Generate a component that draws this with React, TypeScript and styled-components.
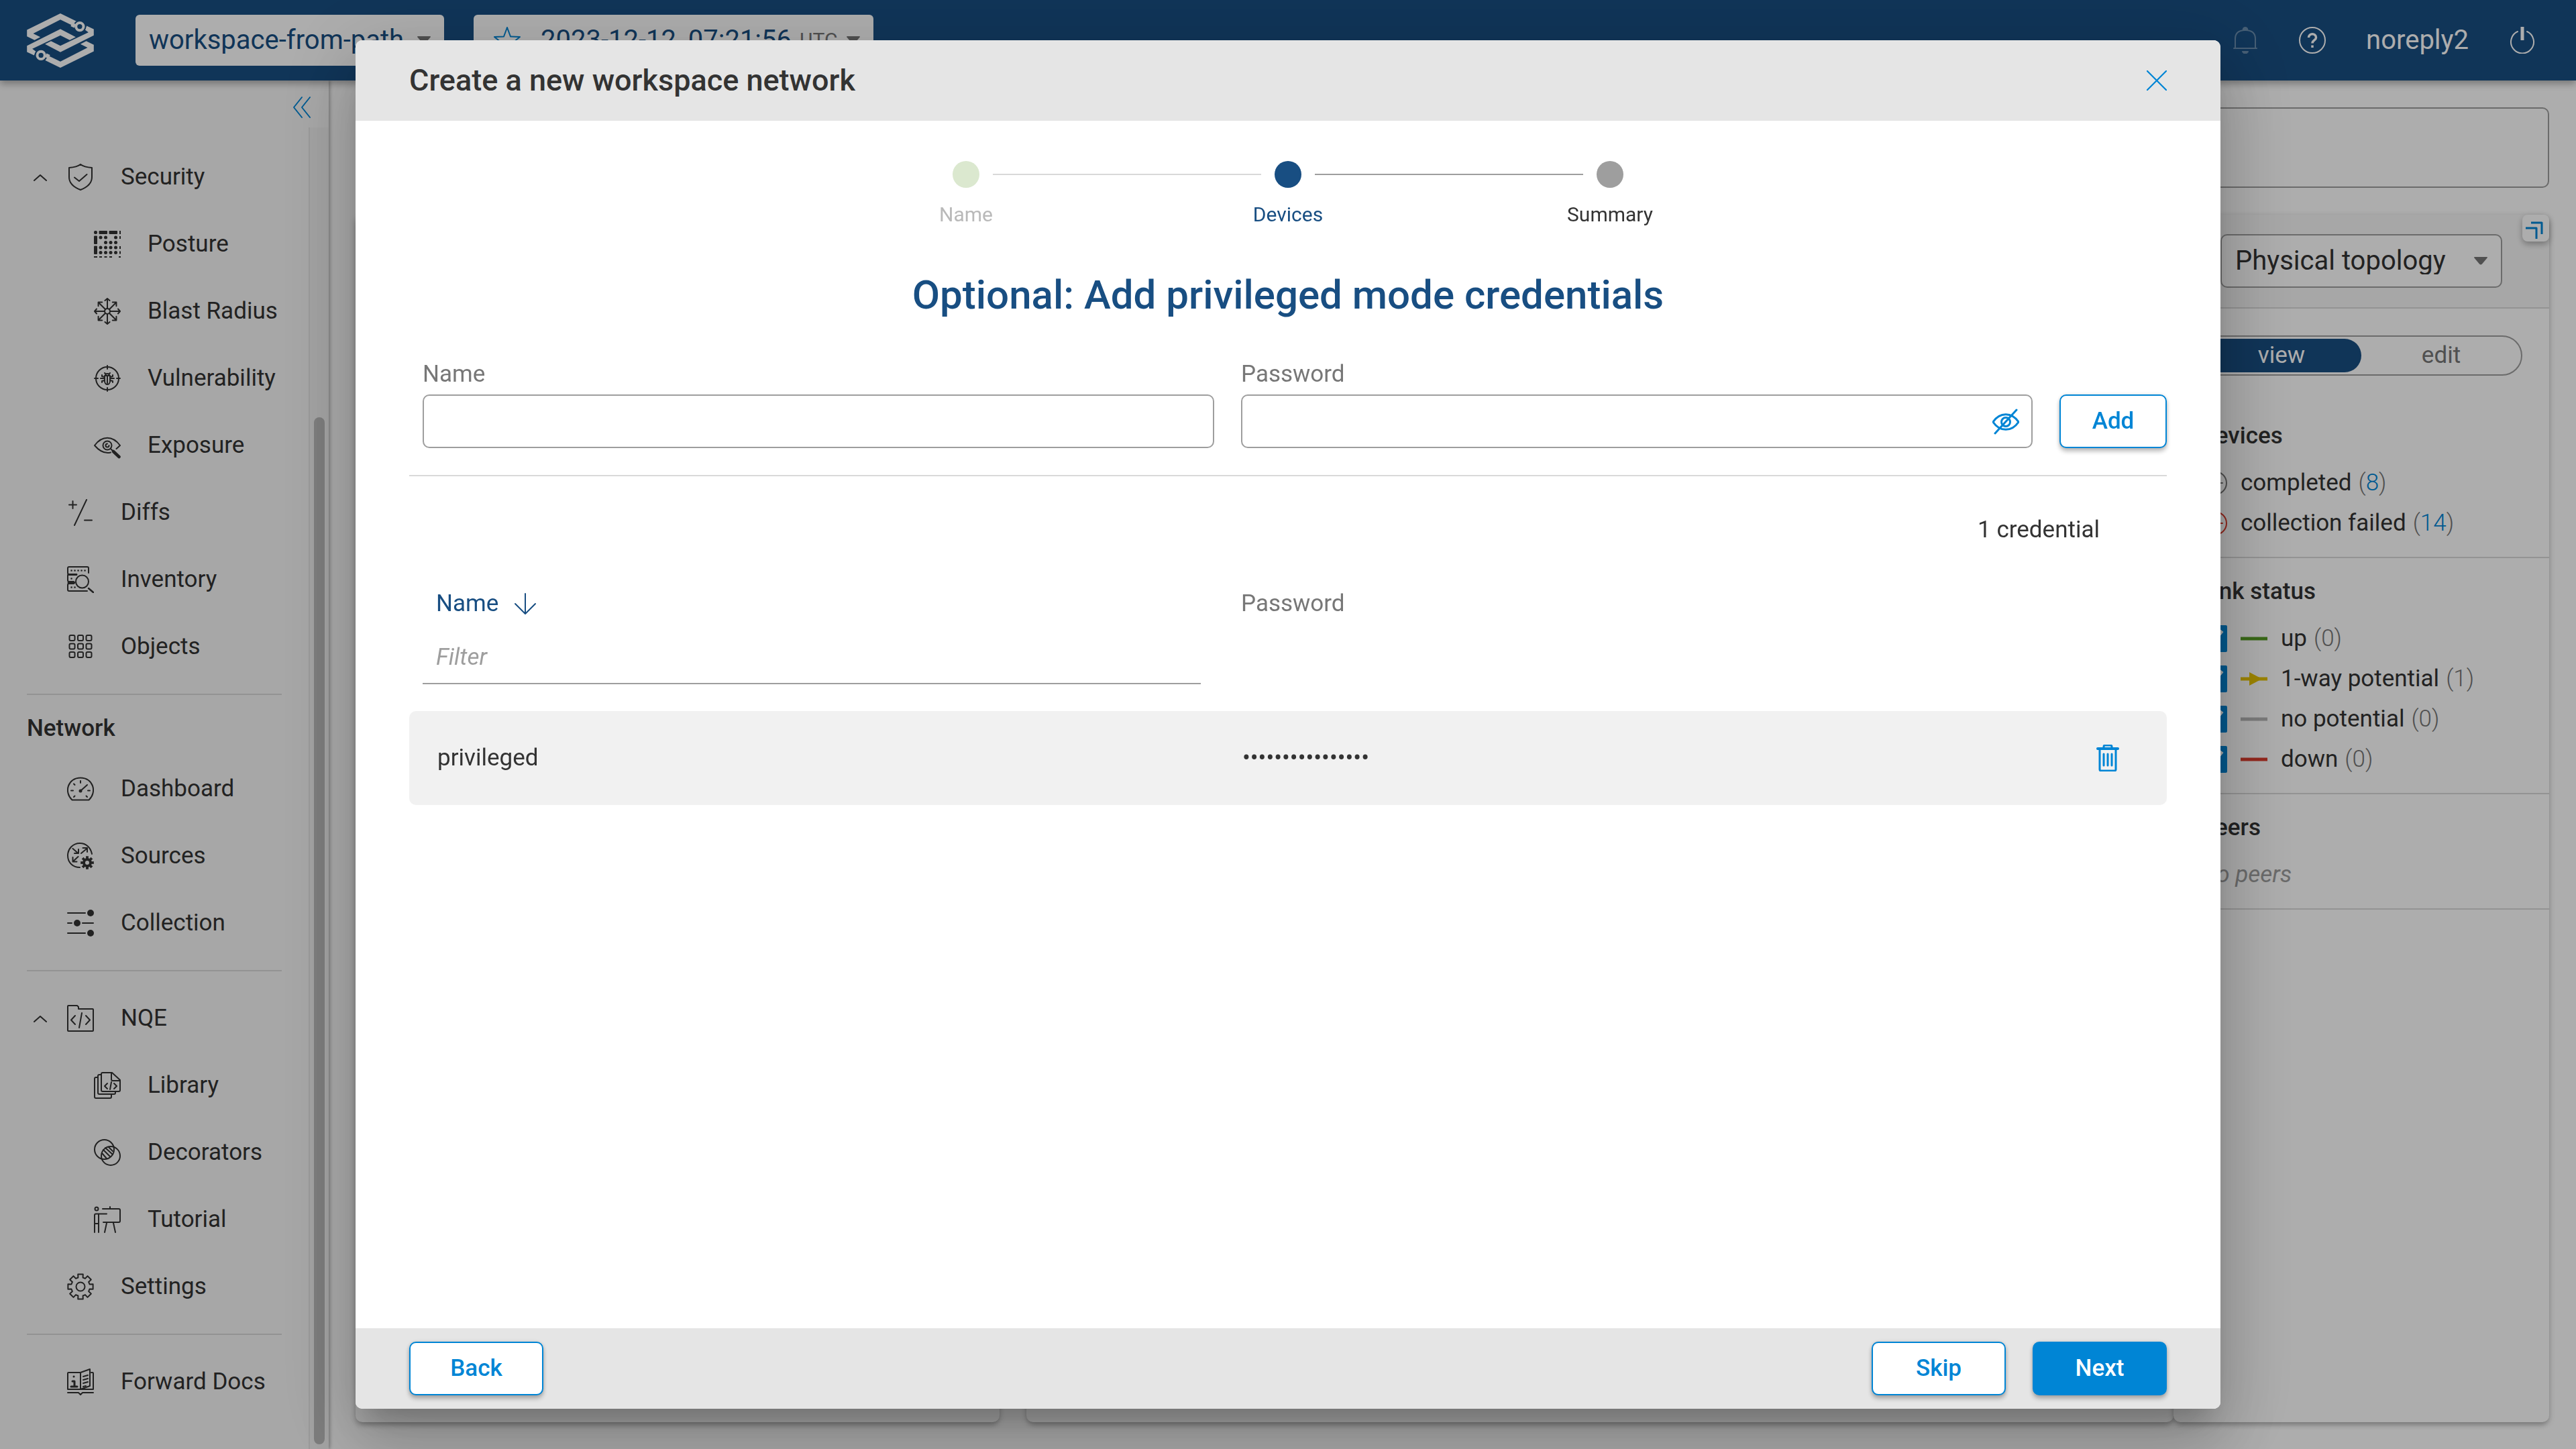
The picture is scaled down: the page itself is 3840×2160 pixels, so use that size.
import React, { ReactNode } from "react";
import styled, { createGlobalStyle, css } from "styled-components";

const color = {
  navy: "#184e82",
  blue: "#0085d5",
  text: "#333",
  muted: "#777",
  line: "#d9d9d9",
  border: "#9e9e9e",
  panel: "#f7f7f7",
  bar: "#e5e5e5",
  row: "#f1f1f1",
};

const GlobalStyle = createGlobalStyle`
  *, *::before, *::after { box-sizing: border-box; }
  body { margin: 0; background: #fff; }
  body, button, input, select {
    font-family: Roboto, sans-serif;
    font-size: 35px;
    line-height: 40px;
    color: ${color.text};
  }
  button { padding: 0; border: 0; background: none; cursor: pointer; }
  a { color: inherit; text-decoration: none; }
  h1, h2, h3, p, ul, ol { margin: 0; padding: 0; font-weight: 400; }
  ul, ol { list-style: none; }
  svg { display: block; flex: none; }
`;

/* ---------- icons ---------- */

const Icon = styled.svg.attrs({ viewBox: "0 0 40 40", fill: "none", stroke: "currentColor", "aria-hidden": true })<{ $size?: number }>`
  width: ${(p) => p.$size ?? 40}px;
  height: ${(p) => p.$size ?? 40}px;
  stroke-width: 2;
  stroke-linecap: round;
  stroke-linejoin: round;
`;

function gearPath(cx: number, cy: number, outer: number, inner: number) {
  const points: string[] = [];
  for (let i = 0; i < 8; i++) {
    const mid = (i * Math.PI) / 4 - Math.PI / 2;
    [
      [inner, -0.26],
      [outer, -0.2],
      [outer, 0.2],
      [inner, 0.26],
    ].forEach(([r, offset]) => {
      points.push(`${(cx + r * Math.cos(mid + offset)).toFixed(2)} ${(cy + r * Math.sin(mid + offset)).toFixed(2)}`);
    });
  }
  return `M${points.join("L")}Z`;
}

const ShieldIcon = () => (
  <Icon>
    <path d="M20 1c4.500 3.500 9.500 4.500 17 5v14c0 9.500-8 15.500-17 19C11 35.500 3 29.500 3 20V6C10.500 5.500 15.500 4.500 20 1Z" />
    <path d="M11 20.500 18 26 29.500 16" />
  </Icon>
);

const postureDots = [
  [10, 10], [17.5, 10], [32.5, 10],
  [17.5, 17.5], [25, 17.5], [32.5, 17.5],
  [10, 25], [17.5, 25], [25, 25], [32.5, 25],
  [10, 32.5], [17.5, 32.5], [25, 32.5], [32.5, 32.5],
];

const PostureIcon = () => (
  <Icon>
    <g fill="currentColor" stroke="none">
      <rect x="0" y="0" width="5" height="5" rx="2" />
      <rect x="7.500" y="0" width="12.500" height="5" rx="1" />
      <rect x="22.500" y="0" width="12.500" height="5" rx="1" />
      <rect x="38" y="0" width="2" height="5" />
      <rect x="0" y="7.500" width="5" height="12.500" rx="1" />
      <rect x="0" y="22.500" width="5" height="12.500" rx="1" />
      <rect x="0" y="38" width="5" height="2" />
      {postureDots.map(([x, y]) => (
        <circle key={`${x}-${y}`} cx={x} cy={y} r="2.500" />
      ))}
      {[10, 25, 32.5].map((y) => (
        <rect key={y} x="38" y={y - 2} width="2" height="4" />
      ))}
      {[10, 17.5, 25, 39].map((x) => (
        <rect key={x} x={x - 2} y="38" width="4" height="2" />
      ))}
    </g>
  </Icon>
);

const BlastIcon = () => (
  <Icon>
    <circle cx="20" cy="20" r="4" />
    {[0, 90, 180, 270].map((a) => (
      <path key={a} transform={`rotate(${a} 20 20)`} d="M20 16V1.500M16.500 4 20 1l3.500 3" />
    ))}
    {[45, 135, 225, 315].map((a) => (
      <path key={a} transform={`rotate(${a} 20 20)`} d="M20 16V1.500M16 5l4-4 4 4" />
    ))}
  </Icon>
);

const BugTargetIcon = () => (
  <Icon>
    <circle cx="20" cy="20" r="17" />
    <path d="M20 1v5M20 34v5M1 20h5M34 20h5" />
    <path d="M16 16h8v8a4 5 0 0 1-8 0ZM17 16c0-4 6-4 6 0M16 12l2 2M24 12l-2 2M16 20h-6M24 20h6M16 18l-4-1v-2M24 18l4-1v-2M16 23l-4 1v2M24 23l4 1v2M20 17v10" />
  </Icon>
);

const ExposureIcon = () => (
  <Icon>
    <path d="M25 30.500C15 33 7 27 1 20 12 5 28 5 39 20l-5.500 5" />
    <circle cx="20" cy="20" r="6.500" />
    <path d="M20 17.500a2.500 2.500 0 1 0 2.500 2.500" />
    <path d="m25 25 3 3" />
    <path d="m29 29 8.500 8" strokeWidth="4.500" />
  </Icon>
);

const DiffsIcon = () => (
  <Icon>
    <path d="M8.500 3v11M3 8.500h11M29 1 11 39M26 31.500h11" />
  </Icon>
);

const InventoryIcon = () => (
  <Icon>
    <path d="M12 12H3a2 2 0 0 1-2-2V3a2 2 0 0 1 2-2h27a2 2 0 0 1 2 2v7M14 12H3a2 2 0 0 0-2 2v7a2 2 0 0 0 2 2h7M10 26H3a2 2 0 0 0-2 2v7a2 2 0 0 0 2 2h27" />
    <path d="M2 12.500h12M2 24.500h9" strokeWidth="3" />
    <circle cx="22.500" cy="23" r="9.500" />
    <path d="m32 33 7 6" strokeWidth="2.500" />
    <path d="M6.500 6.500h.1M11.500 6.500h.1M16.500 6.500h.1M21.500 6.500h.1M26.500 6.500h.1M6.500 18.500h.1M6.500 31.500h.1M11.500 31.500h.1" strokeWidth="2.500" />
  </Icon>
);

const ObjectsIcon = () => (
  <Icon>
    {[3, 15.5, 28].map((y) =>
      [3.5, 16, 28.5].map((x) => <rect key={`${x}-${y}`} x={x} y={y} width="8" height="8" rx="2" />)
    )}
  </Icon>
);

const GaugeIcon = () => (
  <Icon>
    <path d="M7.500 36.500C-5 25 1 3.500 20 3.500S45 25 32.500 36.500Z" />
    <path d="M20 23 30 14M20 8v3M10 12.500l1.500 1.500M6 22.500h3M31 22.500h3M10 32l1.500-1.500M30 32l-1.500-1.500" />
    <circle cx="20" cy="23" r="1.500" />
  </Icon>
);

const SourcesIcon = () => (
  <Icon>
    <path d="M37 17C35 7 28 1 19 1 9 1 1 9 1 19.500S9 37 19 37" />
    <path d="m8.500 9 8 7M17 10v6h-6M21 16l9-7.500M23.500 8H30v6M16.500 21 9 28M8.500 22v6.500h6" />
    <path d={gearPath(30, 30, 10, 7)} fill="currentColor" stroke="none" />
    <circle cx="30" cy="30" r="3" fill={color.panel} stroke="none" />
  </Icon>
);

const SlidersIcon = () => (
  <Icon>
    <path d="M1 5h26M1 20h6M23 20h16M1 35h26" />
    <g fill="currentColor" stroke="none">
      <circle cx="35" cy="5" r="5" />
      <circle cx="15" cy="20" r="5" />
      <circle cx="35" cy="35" r="5" />
    </g>
  </Icon>
);

const FolderCodeIcon = () => (
  <Icon>
    <path d="M1 2a1 1 0 0 1 1-1h13l2 2v3h21a1 1 0 0 1 1 1v31a1 1 0 0 1-1 1H2a1 1 0 0 1-1-1Z" />
    <path d="m12 16-6 6.500 6 6.500M28 16l6 6.500-6 6.500M22 12l-4 22" />
  </Icon>
);

const LibraryIcon = () => (
  <Icon>
    <path d="M11 3a2 2 0 0 1 2-2h14l12 11v15a2 2 0 0 1-2 2H13a2 2 0 0 1-2-2ZM26 1v10a2 2 0 0 0 2 2h11" />
    <path d="M11 4H8a2 2 0 0 0-2 2v25a2 2 0 0 0 2 2h22a2 2 0 0 0 2-2v-2M6 8H3a2 2 0 0 0-2 2v27a2 2 0 0 0 2 2h21a2 2 0 0 0 2-2v-3" />
    <path d="m20 17-4 4 4 4M30 17l4 4-4 4M26 15l-2 11" />
  </Icon>
);

const DecoratorsIcon = () => (
  <Icon>
    <circle cx="15.500" cy="15.500" r="14.500" />
    <circle cx="25" cy="25" r="14" />
    <path d="m14 16 10 10M17 13l11 10M12 21l7 8M22 12l6 6" />
  </Icon>
);

const TutorialIcon = () => (
  <Icon>
    <circle cx="4" cy="4" r="2.500" />
    <path d="M13 4h24a2 2 0 0 1 2 2v16a2 2 0 0 1-2 2H14M24 1v3M19 25l-3 14M29 25l3 14" />
    <path d="M19 11.500H3a2 2 0 0 0-2 2V39M7 12v27M1 26h6" />
  </Icon>
);

const GearIcon = () => (
  <Icon>
    <path d={gearPath(20, 20, 19, 14)} />
    <circle cx="20" cy="20" r="6.500" />
  </Icon>
);

const DocsIcon = () => (
  <Icon>
    <path d="M20 6H2a1 1 0 0 0-1 1v24h38V7a1 1 0 0 0-1-1h-2M20 6v25M20 6l14-5v25l-14 5M1 36h16l3 3 3-3h16" />
    <path d="m24 12 7-2M24 17l7-2M24 22l7-2M24 27l4-1" />
    <path d="M10 12h.1M8 19h3v8M6 27h9" strokeWidth="3" />
  </Icon>
);

const Logo = styled.svg.attrs({ viewBox: "30 54 300 250", "aria-label": "Forward Networks" })`
  width: 100px;
  height: 83px;
  fill: #fff;
`;

/* ---------- top bar ---------- */

const Page = styled.div`
  display: grid;
  grid-template-rows: 120px 1fr;
  height: 100vh;
`;

const TopBar = styled.header`
  z-index: 1;
  display: flex;
  align-items: center;
  padding: 0 60px 0 40px;
  background: ${color.navy};
  color: #fff;
  font-size: 40px;
  box-shadow: 0 5px 10px rgba(0, 0, 0, 0.3);
`;

const selectBox = css`
  position: relative;
  display: flex;
  align-items: center;
  border-radius: 6px;
  background: #fff;
`;

const SelectWrap = styled.label<{ $width: number; $outlined?: boolean; $tone?: string }>`
  ${selectBox}
  width: ${(p) => p.$width}px;
  height: ${(p) => (p.$outlined ? 80 : 76)}px;
  border: ${(p) => (p.$outlined ? `2px solid ${color.border}` : "0")};
  border-radius: ${(p) => (p.$outlined ? 10 : 6)}px;

  select {
    flex: 1;
    height: 100%;
    padding: 0 20px;
    border: 0;
    background: none;
    appearance: none;
    font-size: 40px;
    color: ${(p) => p.$tone ?? color.text};
  }

  svg {
    position: absolute;
    right: 20px;
    pointer-events: none;
  }
`;

const CaretSvg = styled.svg.attrs({ viewBox: "0 0 20 12", "aria-hidden": true })`
  width: 20px;
  height: 12px;
  fill: ${color.muted};
`;

const Caret = () => (
  <CaretSvg>
    <path d="M0 1q0-1 1-1h18q1 0 1 1l-8 9.500q-2 2-4 0Z" />
  </CaretSvg>
);

const SnapshotButton = styled.button`
  ${selectBox}
  width: 596px;
  height: 76px;
  margin-left: 44px;
  padding: 0 20px 0 30px;
  font-size: 40px;
  white-space: nowrap;
  color: ${color.navy};

  > svg:first-child { margin-right: 30px; color: ${color.blue}; }
  small { margin-left: 12px; font-size: 30px; color: ${color.muted}; }
  > svg:last-child { margin-left: auto; }
`;

const WorkspacePicker = styled.div`
  display: flex;
  margin-left: 62px;
`;

const TopActions = styled.div`
  display: flex;
  align-items: center;
  gap: 60px;
  margin-left: auto;
`;

const ActionButton = styled.button<{ $dim?: boolean }>`
  color: #fff;
  opacity: ${(p) => (p.$dim ? 0.35 : 1)};
`;

/* ---------- sidebar ---------- */

const Body = styled.div`
  display: grid;
  grid-template-columns: 490px 1fr;
  min-height: 0;
`;

const Sidebar = styled.aside`
  display: flex;
  flex-direction: column;
  min-height: 0;
  background: ${color.panel};
  box-shadow: 2px 0 5px rgba(0, 0, 0, 0.3);
`;

const CollapseRow = styled.div`
  display: flex;
  justify-content: flex-end;
  align-items: center;
  height: 70px;
  padding: 10px 20px 0 0;

  button { color: ${color.blue}; }
`;

const SidebarScroll = styled.div`
  display: grid;
  grid-template-columns: 1fr 30px;
  flex: 1;
  min-height: 0;
`;

const Nav = styled.nav`
  padding: 24px 40px 0;
  overflow: hidden;
`;

const Track = styled.div`
  display: flex;
  flex-direction: column;
  justify-content: flex-end;
  align-items: center;
  padding-bottom: 7px;
  border-left: 2px solid #e5e5e5;
  background: #f2f2f2;
`;

const Thumb = styled.div`
  width: 16px;
  height: 78%;
  border-radius: 8px;
  background: #bababa;
`;

const NavRow = styled.div<{ $nested?: boolean }>`
  display: flex;
  align-items: center;
  height: 100px;
  padding-left: ${(p) => (p.$nested ? 40 : 0)}px;

  a { display: flex; align-items: center; gap: 40px; white-space: nowrap; }
`;

const ToggleSlot = styled.div`
  width: 60px;
  padding-left: 10px;
`;

const NavRule = styled.hr`
  width: 380px;
  height: 2px;
  margin: 20px 0;
  border: 0;
  background: ${color.line};
`;

const NavHeading = styled.h2`
  margin: 30px 0 20px;
  font-size: 35px;
  font-weight: 500;
`;

type NavItemProps = { icon: ReactNode; children: ReactNode; nested?: boolean; open?: boolean };

const NavItem = ({ icon, children, nested, open }: NavItemProps) => (
  <NavRow $nested={nested}>
    <ToggleSlot>
      {open && (
        <button aria-label={`Collapse ${children}`}>
          <Icon $size={20}>
            <path d="M2 28 20 12l18 16" strokeWidth="4" />
          </Icon>
        </button>
      )}
    </ToggleSlot>
    <a href="#">
      {icon}
      {children}
    </a>
  </NavRow>
);

/* ---------- topology page ---------- */

const Main = styled.main`
  display: grid;
  grid-template-rows: 120px 1fr;
  gap: 40px;
  min-width: 0;
  min-height: 0;
  padding: 40px;
`;

const SearchBox = styled.input`
  width: 100%;
  border: 2px solid ${color.border};
  border-radius: 10px;
  background: #fff;
`;

const Columns = styled.div`
  display: grid;
  grid-template-columns: 1000px 1fr 560px;
  min-height: 0;
`;

const Panel = styled.section<{ $spaced?: boolean }>`
  margin-right: ${(p) => (p.$spaced ? 40 : 0)}px;
  border-radius: 10px;
  background: #fff;
  box-shadow: 0 3px 8px rgba(0, 0, 0, 0.25), 0 8px 8px -4px rgba(0, 0, 0, 0.12);
`;

const PanelHead = styled.div`
  display: flex;
  justify-content: flex-end;
  align-items: flex-start;
  gap: 30px;
  height: 140px;
  border-bottom: 2px solid ${color.line};
  border-radius: 10px 10px 0 0;
  background: ${color.panel};
`;

const HeadSelect = styled.div`
  padding-top: 29px;
`;

const ExpandButton = styled.button`
  display: grid;
  place-items: center;
  width: 40px;
  height: 40px;
  border-radius: 8px;
  background: #fff;
  color: ${color.blue};
  box-shadow: 0 4px 10px rgba(0, 0, 0, 0.3);
`;

const ModeToggle = styled.div`
  display: grid;
  grid-template-columns: 1fr 1fr;
  height: 60px;
  margin: 40px 40px 60px;
  padding: 3px 0;
  border: 2px solid ${color.border};
  border-radius: 30px;
`;

const ModeButton = styled.button<{ $active?: boolean }>`
  border-radius: 25px;
  background: ${(p) => (p.$active ? color.navy : "none")};
  color: ${(p) => (p.$active ? "#fff" : color.muted)};
`;

const LegendGroup = styled.div`
  padding: 0 40px 20px;
  border-bottom: 2px solid ${color.line};

  & + & { padding-top: 20px; }
  h3 { margin-bottom: 10px; font-size: 35px; line-height: 60px; font-weight: 500; }
`;

const LegendRow = styled.div`
  display: flex;
  align-items: center;
  gap: 20px;
  height: 60px;
  white-space: nowrap;

  label { display: flex; align-items: center; gap: 20px; }
`;

const Count = styled.span`
  margin-left: -10px;
  font-weight: 300;
  color: ${color.muted};

  a { color: ${color.blue}; }
`;

const Tick = styled.input.attrs({ type: "checkbox", defaultChecked: true })`
  width: 40px;
  height: 40px;
  margin: 0;
  accent-color: ${color.blue};
`;

const Empty = styled.p`
  line-height: 60px;
  font-style: italic;
  color: ${color.border};
`;

const StatusIcon = ({ tone }: { tone: string }) => (
  <Icon color={tone}>
    <circle cx="22" cy="20" r="17" />
    <path d="M11 20h22" />
  </Icon>
);

const LinkLine = ({ tone, arrow }: { tone: string; arrow?: boolean }) => (
  <Icon>
    <path d="M0 20h40" stroke={tone} strokeWidth="5" strokeLinecap="butt" />
    {arrow && <path d="M13 10v20l19-10Z" fill={tone} stroke="none" />}
  </Icon>
);

/* ---------- dialog ---------- */

const Backdrop = styled.div`
  position: fixed;
  inset: 0;
  z-index: 2;
  display: flex;
  justify-content: center;
  padding: 60px;
  background: rgba(0, 0, 0, 0.32);
`;

const Dialog = styled.section`
  display: flex;
  flex-direction: column;
  width: 2780px;
  max-width: 100%;
  border-radius: 10px;
  overflow: hidden;
  background: #fff;
  box-shadow: 0 28px 38px -18px rgba(0, 0, 0, 0.2), 0 60px 95px 8px rgba(0, 0, 0, 0.14),
    0 22px 115px 20px rgba(0, 0, 0, 0.12);
`;

const DialogHead = styled.header`
  display: flex;
  justify-content: space-between;
  align-items: center;
  height: 120px;
  padding: 0 80px;
  background: ${color.bar};

  h1 { font-size: 45px; line-height: 60px; font-weight: 500; }
  button { color: ${color.blue}; }
`;

const DialogBody = styled.div`
  flex: 1;
  padding: 60px 80px 0;
  overflow: auto;
`;

const DialogFoot = styled.footer`
  display: flex;
  align-items: center;
  gap: 40px;
  height: 120px;
  padding: 0 80px;
  background: ${color.bar};
`;

const Spacer = styled.span`
  flex: 1;
`;

const Button = styled.button<{ $primary?: boolean; $narrow?: boolean }>`
  width: ${(p) => (p.$narrow ? 160 : 200)}px;
  height: 80px;
  border: 2px solid ${color.blue};
  border-radius: 10px;
  background: ${(p) => (p.$primary ? color.blue : "#fff")};
  color: ${(p) => (p.$primary ? "#fff" : color.blue)};
  font-weight: 500;
  box-shadow: 0 5px 6px rgba(0, 0, 0, 0.25), 0 0 5px rgba(0, 0, 0, 0.12);
`;

const Steps = styled.ol`
  display: flex;
  justify-content: center;
`;

const Step = styled.li<{ $tone: string }>`
  width: 480px;
  text-align: center;
  font-size: 30px;
  color: ${(p) => p.$tone};
`;

const StepTrack = styled.div`
  display: flex;
  align-items: center;
  gap: 20px;
  margin-bottom: 20px;
`;

const StepLine = styled.span<{ $tone: string }>`
  flex: 1;
  height: 2px;
  background: ${(p) => p.$tone};
`;

const StepDot = styled.span<{ $tone: string }>`
  width: 40px;
  height: 40px;
  border-radius: 50%;
  background: ${(p) => p.$tone};
`;

const steps = [
  { name: "Name", text: "#b9b9b9", dot: "#dbe8cf", before: "transparent", after: color.line },
  { name: "Devices", text: color.navy, dot: color.navy, before: color.line, after: color.border },
  { name: "Summary", text: color.text, dot: color.border, before: color.border, after: "transparent" },
];

const Heading = styled.h2`
  margin-top: 60px;
  font-size: 60px;
  line-height: 80px;
  font-weight: 500;
  text-align: center;
  color: ${color.navy};
`;

const CredentialForm = styled.form`
  display: grid;
  grid-template-columns: 1fr 1fr auto;
  align-items: end;
  gap: 40px;
  margin-top: 58px;
  padding: 0 0 40px 20px;
  border-bottom: 2px solid ${color.line};
`;

const Field = styled.div`
  display: grid;
  gap: 10px;

  label { color: ${color.muted}; }
`;

const FieldBox = styled.div`
  display: flex;
  align-items: center;
  height: 80px;
  padding: 0 18px;
  border: 2px solid ${color.border};
  border-radius: 10px;

  input { flex: 1; min-width: 0; height: 100%; padding: 0; border: 0; outline: 0; background: none; }
  button { color: ${color.blue}; }
`;

const Total = styled.p`
  margin: 60px 100px 70px 0;
  text-align: right;
`;

const Table = styled.table`
  width: 100%;
  border-collapse: separate;
  border-spacing: 0;
  table-layout: fixed;

  th { padding: 0; text-align: left; vertical-align: top; font-weight: 400; color: ${color.muted}; }
  th:first-child { padding: 0 60px 40px 20px; }
  td { height: 140px; padding: 0 0 0 2px; background: ${color.row}; }
  td:first-child { padding-left: 42px; border-radius: 10px 0 0 10px; }
  td:last-child { border-radius: 0 10px 10px 0; }
`;

const ActionCol = styled.col`
  width: 140px;
`;

const SortButton = styled.button`
  display: flex;
  align-items: center;
  gap: 20px;
  padding-left: 20px;
  color: ${color.navy};
`;

const FilterInput = styled.input`
  display: block;
  width: 100%;
  height: 80px;
  margin-top: 20px;
  padding: 0 20px;
  border: 0;
  border-bottom: 2px solid ${color.border};
  outline: 0;
  background: none;

  &::placeholder { font-style: italic; color: ${color.border}; opacity: 1; }
`;

const DeleteButton = styled.button`
  display: block;
  margin-left: 30px;
  color: ${color.blue};
`;

const App = () => (
  <>
    <GlobalStyle />
    <Page>
      <TopBar>
        <Logo>
          <path d="M180 57 30 131v29l34 17 26-14-32-16 122-62 62 30 12-22ZM180 127 30 202v28l32 15 8-17-16-12 126-60 42 21 27-14ZM180 231l150-75v-28l-32-15-8 17 16 12-126 60-42-21-27 14ZM180 301l150-74v-29l-34-17-26 14 32 16-122 62-62-30-12 22Z" />
          <circle cx="267" cy="116" r="29" fill={color.navy} />
          <circle cx="267" cy="116" r="17" fill={color.navy} stroke="#fff" strokeWidth="12" />
          <circle cx="93" cy="245" r="29" fill={color.navy} />
          <circle cx="93" cy="245" r="17" fill={color.navy} stroke="#fff" strokeWidth="12" />
          <path d="m234 98 16 8-8 16-16-8ZM126 260l-16-8 8-16 16 8Z" />
        </Logo>
        <WorkspacePicker>
          <SelectWrap $width={460} $tone={color.navy}>
            <select aria-label="Workspace" defaultValue="w">
              <option value="w">workspace-from-path</option>
            </select>
            <Caret />
          </SelectWrap>
          <SnapshotButton>
            <Icon>
              <path d="m20 1 5 13.500 14 .5-11 9 4 14-12-8-12 8 4-14L1 15l14-.5Z" />
            </Icon>
            2023-12-12, 07:21:56
            <small>UTC</small>
            <Caret />
          </SnapshotButton>
        </WorkspacePicker>
        <TopActions>
          <ActionButton $dim aria-label="Notifications">
            <Icon>
              <path d="M5 31V18c0-8 5-13 15-13s15 5 15 13v13M3 32h34" />
              <path d="M20 1a3 3 0 0 0-3 4h6a3 3 0 0 0-3-4ZM16 37h8l-2 2h-4Z" fill="currentColor" />
            </Icon>
          </ActionButton>
          <ActionButton aria-label="Help">
            <Icon>
              <circle cx="20" cy="20" r="19" />
              <path d="M14.500 16c0-7 11-7 11 0 0 4-5.500 4-5.500 8.500M20 27.500v3.500" strokeWidth="3.500" strokeLinecap="butt" />
            </Icon>
          </ActionButton>
          <a href="#">noreply2</a>
          <ActionButton aria-label="Sign out">
            <Icon>
              <path d="M13 7a17 17 0 1 0 14 0" />
              <path d="M20 0v20" strokeWidth="5" strokeLinecap="butt" />
            </Icon>
          </ActionButton>
        </TopActions>
      </TopBar>
      <Body>
        <Sidebar>
          <CollapseRow>
            <button aria-label="Collapse sidebar">
              <Icon>
                <path d="M20 5 8 20l12 15M32 5 20 20l12 15" />
              </Icon>
            </button>
          </CollapseRow>
          <SidebarScroll>
            <Nav aria-label="Main">
              <NavItem icon={<ShieldIcon />} open>Security</NavItem>
              <NavItem icon={<PostureIcon />} nested>Posture</NavItem>
              <NavItem icon={<BlastIcon />} nested>Blast Radius</NavItem>
              <NavItem icon={<BugTargetIcon />} nested>Vulnerability</NavItem>
              <NavItem icon={<ExposureIcon />} nested>Exposure</NavItem>
              <NavItem icon={<DiffsIcon />}>Diffs</NavItem>
              <NavItem icon={<InventoryIcon />}>Inventory</NavItem>
              <NavItem icon={<ObjectsIcon />}>Objects</NavItem>
              <NavRule />
              <NavHeading>Network</NavHeading>
              <NavItem icon={<GaugeIcon />}>Dashboard</NavItem>
              <NavItem icon={<SourcesIcon />}>Sources</NavItem>
              <NavItem icon={<SlidersIcon />}>Collection</NavItem>
              <NavRule />
              <NavItem icon={<FolderCodeIcon />} open>NQE</NavItem>
              <NavItem icon={<LibraryIcon />} nested>Library</NavItem>
              <NavItem icon={<DecoratorsIcon />} nested>Decorators</NavItem>
              <NavItem icon={<TutorialIcon />} nested>Tutorial</NavItem>
              <NavItem icon={<GearIcon />}>Settings</NavItem>
              <NavRule />
              <NavItem icon={<DocsIcon />}>Forward Docs</NavItem>
            </Nav>
            <Track>
              <Thumb />
            </Track>
          </SidebarScroll>
        </Sidebar>
        <Main>
          <SearchBox aria-label="Search" />
          <Columns>
            <Panel $spaced />
            <Panel />
            <Panel>
              <PanelHead>
                <HeadSelect>
                  <SelectWrap $width={420} $outlined>
                    <select aria-label="Topology" defaultValue="p">
                      <option value="p">Physical topology</option>
                    </select>
                    <Caret />
                  </SelectWrap>
                </HeadSelect>
                <ExpandButton aria-label="Expand panel">
                  <Icon>
                    <path d="M13 12h16v17M5 20h16v16" strokeWidth="3" strokeLinecap="butt" />
                  </Icon>
                </ExpandButton>
              </PanelHead>
              <ModeToggle>
                <ModeButton $active>view</ModeButton>
                <ModeButton>edit</ModeButton>
              </ModeToggle>
              <LegendGroup>
                <h3>Devices</h3>
                <LegendRow>
                  <StatusIcon tone="#777" />
                  completed <Count>(<a href="#">8</a>)</Count>
                </LegendRow>
                <LegendRow>
                  <StatusIcon tone="#d93a2b" />
                  collection failed <Count>(<a href="#">14</a>)</Count>
                </LegendRow>
              </LegendGroup>
              <LegendGroup>
                <h3>Link status</h3>
                <LegendRow>
                  <label><Tick /><LinkLine tone="#549a22" />up</label>
                  <Count>(0)</Count>
                </LegendRow>
                <LegendRow>
                  <label><Tick /><LinkLine tone="#e6c200" arrow />1-way potential</label>
                  <Count>(1)</Count>
                </LegendRow>
                <LegendRow>
                  <label><Tick /><LinkLine tone="#b4b4b4" />no potential</label>
                  <Count>(0)</Count>
                </LegendRow>
                <LegendRow>
                  <label><Tick /><LinkLine tone="#d93a2b" />down</label>
                  <Count>(0)</Count>
                </LegendRow>
              </LegendGroup>
              <LegendGroup>
                <h3>Peers</h3>
                <Empty>No peers</Empty>
              </LegendGroup>
            </Panel>
          </Columns>
        </Main>
      </Body>
    </Page>

    <Backdrop>
      <Dialog role="dialog" aria-modal="true" aria-labelledby="dialog-title">
        <DialogHead>
          <h1 id="dialog-title">Create a new workspace network</h1>
          <button aria-label="Close">
            <Icon $size={30}>
              <path d="m1 1 38 38M39 1 1 39" strokeWidth="3" />
            </Icon>
          </button>
        </DialogHead>
        <DialogBody>
          <Steps>
            {steps.map((step) => (
              <Step key={step.name} $tone={step.text}>
                <StepTrack>
                  <StepLine $tone={step.before} />
                  <StepDot $tone={step.dot} />
                  <StepLine $tone={step.after} />
                </StepTrack>
                {step.name}
              </Step>
            ))}
          </Steps>
          <Heading>Optional: Add privileged mode credentials</Heading>
          <CredentialForm onSubmit={(e) => e.preventDefault()}>
            <Field>
              <label htmlFor="credential-name">Name</label>
              <FieldBox>
                <input id="credential-name" />
              </FieldBox>
            </Field>
            <Field>
              <label htmlFor="credential-password">Password</label>
              <FieldBox>
                <input id="credential-password" type="password" />
                <button type="button" aria-label="Show password">
                  <Icon>
                    <path d="M1 21C11 6 29 6 39 21 29 36 11 36 1 21Z" strokeWidth="3" />
                    <circle cx="20" cy="21" r="6.500" strokeWidth="3" />
                    <path d="M36 3 4 38" strokeWidth="3" />
                  </Icon>
                </button>
              </FieldBox>
            </Field>
            <Button $narrow>Add</Button>
          </CredentialForm>
          <Total>1 credential</Total>
          <Table>
            <colgroup>
              <col />
              <col />
              <ActionCol />
            </colgroup>
            <thead>
              <tr>
                <th>
                  <SortButton>
                    Name
                    <Icon>
                      <path d="M20 5v29M5 20l15 15 15-15" />
                    </Icon>
                  </SortButton>
                  <FilterInput placeholder="Filter" aria-label="Filter by name" />
                </th>
                <th>Password</th>
                <th aria-label="Actions" />
              </tr>
            </thead>
            <tbody>
              <tr>
                <td>privileged</td>
                <td>••••••••••••••••</td>
                <td>
                  <DeleteButton aria-label="Delete privileged">
                    <Icon>
                      <path d="M5 6h30" strokeWidth="4" />
                      <path d="M8 8v29a2 2 0 0 0 2 2h20a2 2 0 0 0 2-2V8M14 5V3a2 2 0 0 1 2-2h8a2 2 0 0 1 2 2v2M14 14v17M20 14v17M26 14v17" strokeWidth="3" />
                    </Icon>
                  </DeleteButton>
                </td>
              </tr>
            </tbody>
          </Table>
        </DialogBody>
        <DialogFoot>
          <Button>Back</Button>
          <Spacer />
          <Button>Skip</Button>
          <Button $primary>Next</Button>
        </DialogFoot>
      </Dialog>
    </Backdrop>
  </>
);

export default App;
